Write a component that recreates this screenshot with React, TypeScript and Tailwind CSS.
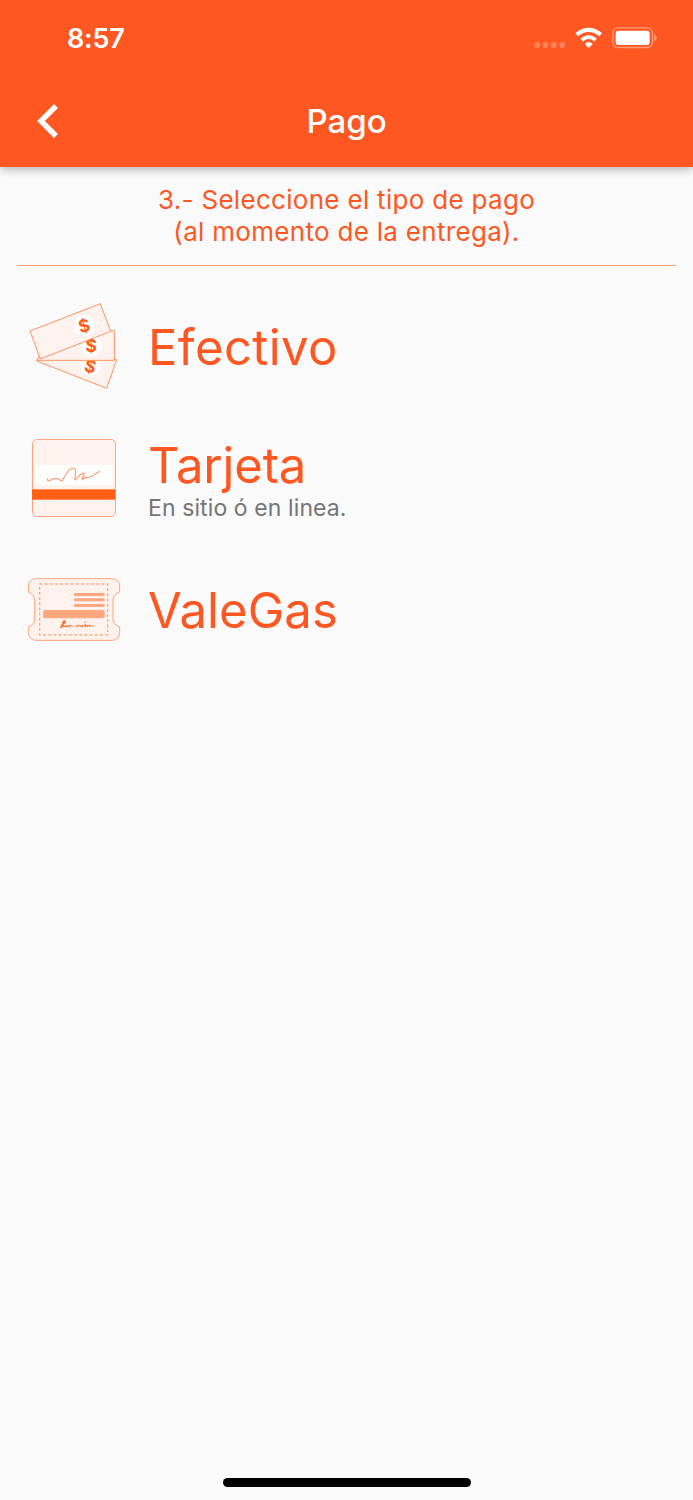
import type { ReactNode } from "react";

const CashIcon = () => (
  <svg className="w-[110px] h-[110px] shrink-0" viewBox="0 0 330 330" fill="#fdf2ed" stroke="#ff9460" strokeWidth="3">
    <path d="M50 213 L58 198 L290 209 L260 295 Z" />
    <circle cx="211" cy="226" r="31" fill="#fff" stroke="none" />
    <text x="211" y="247" fontSize="52" fontWeight="700" textAnchor="middle" fill="#ff5a13" stroke="none" transform="rotate(15 210 228)">$</text>
    <path d="M50 211 L60 198 L262 122 H283 V211 Z" />
    <circle cx="215" cy="168" r="31" fill="#fff" stroke="none" />
    <text x="214" y="185" fontSize="52" fontWeight="700" textAnchor="middle" fill="#ff5a13" stroke="none">$</text>
    <path d="M30 123 L241 41 L272 124 L61 207 Z" />
    <circle cx="193" cy="107" r="31" fill="#fff" stroke="none" />
    <text x="193" y="126" fontSize="52" fontWeight="700" textAnchor="middle" fill="#ff5a13" stroke="none" transform="rotate(-15 193 108)">$</text>
  </svg>
);

const CardIcon = () => (
  <svg className="w-[110px] h-[100px] shrink-0" viewBox="0 0 330 300" fill="none">
    <rect x="37.5" y="28.5" width="249" height="231" rx="13" fill="#fdf2ed" stroke="#ffa47d" strokeWidth="3" />
    <rect x="45" y="105" width="233" height="60" fill="#fff" />
    <rect x="36" y="178" width="250" height="31" fill="#ff5f15" />
    <path
      d="M83 146 C82 157 88 153 94 149 C104 144 115 146 119 149 C125 157 128 152 131 145 C139 131 146 117 157 114 C168 114 168 124 166 134 C163 153 164 152 170 145 C179 134 190 126 193 130 C185 143 186 151 189 149 L193 142 C203 145 218 139 224 133 L239 124"
      stroke="#ff9a6e"
      strokeWidth="3.5"
      strokeLinecap="round"
      strokeLinejoin="round"
    />
  </svg>
);

const TicketIcon = () => (
  <svg className="w-[110px] h-[90px] shrink-0" viewBox="0 0 330 270" fill="none" stroke="#ffa47d" strokeWidth="3">
    <path
      d="M47 41 H277 Q299 42 299 65 V81 Q281 87 279 105 V165 Q281 180 299 185 V202 Q299 224 277 226 H47 Q26 224 25 202 V185 Q42 181 44 164 V105 Q42 87 25 81 V65 Q26 43 47 41 Z"
      fill="#fdf2ed"
    />
    <rect x="59" y="57" width="204" height="153" strokeWidth="4" strokeDasharray="8 7.5" />
    <path d="M166 88.5 H250 M166 104.5 H250 M166 121.5 H250" stroke="#ffa880" strokeWidth="9" strokeLinecap="round" />
    <rect x="69" y="135" width="185" height="25" rx="5" fill="#ffa880" stroke="none" />
    <g stroke="#ff681e" strokeWidth="3" strokeLinecap="round" strokeLinejoin="round">
      <path d="M129 173 Q130 167 135 169 Q136 174 130 175 L123 187" strokeWidth="5" />
      <path d="M123 187 L132 181 L131 186 L140 181 L139 186 L145 182 M149 180 L147 185 M150 185 L154 181 L158 184" />
      <path d="M166 186 L172 181 L173 185 L179 180 L181 185 L187 181 L186 185 L191 184 L196 178 L195 185 L201 180 L202 185 L208 180 L210 185 L215 182 L220 184" />
      <path d="M194 173 L197 171" />
    </g>
  </svg>
);

const StatusIcons = () => (
  <svg className="w-[150px] h-[50px]" viewBox="0 0 450 150" fill="none">
    <g fill="#fff" fillOpacity="0.25">
      <rect x="43" y="81" width="17" height="18" rx="6" />
      <rect x="68" y="81" width="17" height="18" rx="6" />
      <rect x="93" y="81" width="17" height="18" rx="6" />
      <rect x="118" y="81" width="17" height="18" rx="6" />
    </g>
    <path d="M170 59 Q206 30 242 59 M185 75 Q206 57 227 75" stroke="#fff" strokeWidth="12" />
    <path d="M194 87 Q206 75 218 87 L206 99 Z" fill="#fff" />
    <rect x="278.5" y="38.5" width="119" height="59" rx="16" stroke="#fff" strokeOpacity="0.4" strokeWidth="4" />
    <rect x="287" y="47" width="102" height="43" rx="9" fill="#fff" />
    <path d="M403 58 Q410 61 410 68 Q410 75 403 79 Z" fill="#fff" fillOpacity="0.45" />
  </svg>
);

type OptionProps = {
  icon: ReactNode;
  title: string;
  subtitle?: string;
  className: string;
};

const PaymentOption = ({ icon, title, subtitle, className }: OptionProps) => (
  <button className={`flex w-full items-center gap-[18px] text-left text-[49px] leading-[58px] text-[#ff5722] ${className}`}>
    {icon}
    <span className="flex flex-col">
      <span>{title}</span>
      {subtitle && <span className="text-[23px] leading-[26px] tracking-[0.1px] text-[#757575]">{subtitle}</span>}
    </span>
  </button>
);

const App = () => {
  return (
    <div className="flex h-[1500px] w-[693px] flex-col bg-[#fafafa] font-['Inter',sans-serif]">
      <header className="h-[167px] bg-[#ff5722] text-white shadow-[0_2px_9px_rgba(0,0,0,0.3)]">
        <div className="flex h-[75px] items-start justify-between pt-[15px] pr-[23px] pl-[67px]">
          <span className="pt-2 text-[27px] leading-8 font-semibold tracking-[-0.2px]">8:57</span>
          <StatusIcons />
        </div>
        <div className="grid h-[91px] grid-cols-[100px_1fr_100px] items-center">
          <button aria-label="Regresar" className="pl-[36px]">
            <svg className="h-[34px] w-[22px]" viewBox="0 0 22 34" fill="none" stroke="#fff" strokeWidth="5.5">
              <path d="M20 2 L5 17 L20 32" />
            </svg>
          </button>
          <h1 className="text-center text-[33px] leading-10 font-medium">Pago</h1>
        </div>
      </header>

      <main className="flex-1">
        <p className="mx-[17px] h-[99px] border-b border-[#ff9c78] pt-[17px] text-center text-[26px] leading-8 tracking-[0.3px] text-[#ff5722]">
          3.- Seleccione el tipo de pago
          <br />
          (al momento de la entrega).
        </p>
        <div className="flex flex-col pt-6 pl-5">
          <PaymentOption icon={<CashIcon />} title="Efectivo" className="tracking-[0.4px] [&>span]:pt-[6px]" />
          <PaymentOption
            icon={<CardIcon />}
            title="Tarjeta"
            subtitle="En sitio ó en linea."
            className="mt-[30px] tracking-[-0.1px] [&>span]:pb-0.5"
          />
          <PaymentOption icon={<TicketIcon />} title="ValeGas" className="mt-[35px] tracking-[0.1px] [&>span]:pt-0.5" />
        </div>
      </main>

      <footer className="flex justify-center pb-[13px]">
        <div className="h-[9px] w-[248px] rounded-full bg-black" />
      </footer>
    </div>
  );
};

export default App;
